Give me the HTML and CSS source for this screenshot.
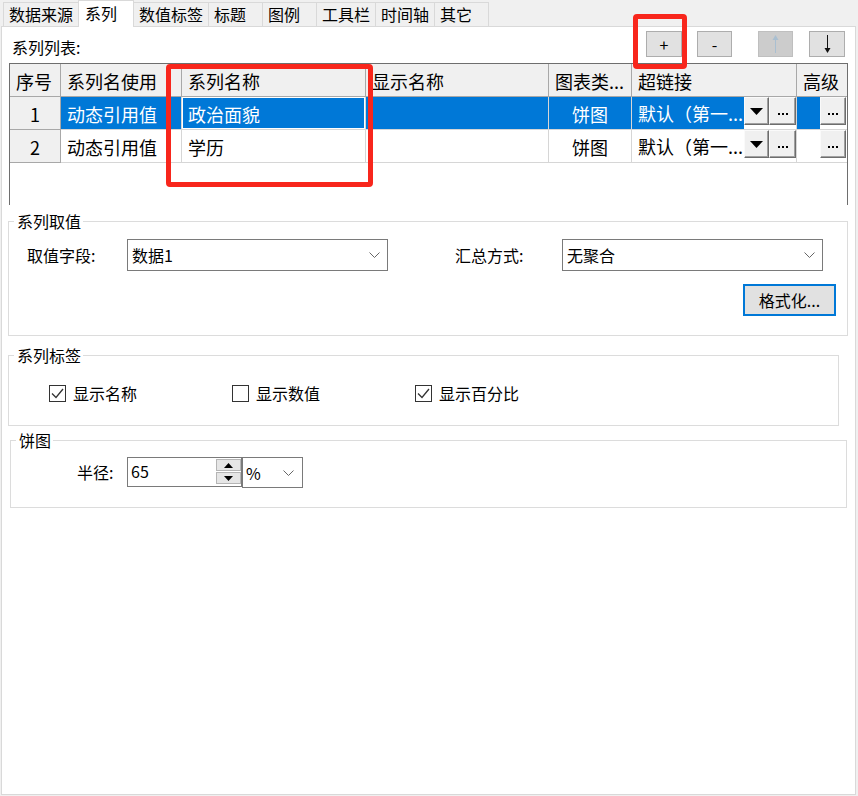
FILE: index.html
```html
<!DOCTYPE html>
<html lang="zh-CN">
<head>
    <meta charset="UTF-8">
    <meta name="viewport" content="width=device-width, initial-scale=1.0">
    <title>系列</title>
    <link rel="stylesheet" href="styles.css">
</head>
<body>
    <div class="tabs">
        <div class="tab">数据来源</div>
        <div class="tab on">系列</div>
        <div class="tab">数值标签</div>
        <div class="tab">标题</div>
        <div class="tab">图例</div>
        <div class="tab">工具栏</div>
        <div class="tab">时间轴</div>
        <div class="tab">其它</div>
    </div>

    <div class="panel">
        <div class="list_head">
            <span class="list_title">系列列表:</span>
            <div class="tool_btns">
                <button class="tool add">+</button>
                <button class="tool del">-</button>
                <button class="tool up" disabled>
                    <svg width="7" height="18" viewBox="0 0 7 18"><line x1="3.5" y1="4" x2="3.5" y2="18" stroke="#a9bfd1"/><polygon points="0.5,5 6.5,5 3.5,0" fill="#a9bfd1"/></svg>
                </button>
                <button class="tool down">
                    <svg width="7" height="18" viewBox="0 0 7 18"><line x1="3.5" y1="0" x2="3.5" y2="14" stroke="#111"/><polygon points="0.5,13 6.5,13 3.5,18" fill="#111"/></svg>
                </button>
            </div>
        </div>

        <div class="grid_wrap">
            <table class="grid">
                <colgroup>
                    <col style="width:51px">
                    <col style="width:121px">
                    <col style="width:184px">
                    <col style="width:183px">
                    <col style="width:83px">
                    <col style="width:165px">
                    <col style="width:50px">
                </colgroup>
                <thead>
                    <tr>
                        <th>序号</th>
                        <th>系列名使用</th>
                        <th>系列名称</th>
                        <th>显示名称</th>
                        <th>图表类...</th>
                        <th>超链接</th>
                        <th>高级</th>
                    </tr>
                </thead>
                <tbody>
                    <tr class="sel">
                        <td class="num">1</td>
                        <td>动态引用值</td>
                        <td class="focus">政治面貌</td>
                        <td></td>
                        <td class="center">饼图</td>
                        <td class="link">
                            <div class="link_cell">
                                <span class="link_text">默认（第一...</span>
                                <button class="cell_btn drop"><svg width="13" height="7" viewBox="0 0 13 7"><polygon points="0,0 13,0 6.5,7" fill="#000"/></svg></button>
                                <button class="cell_btn more"><svg width="10" height="10" viewBox="0 0 10 10"><rect x="0" y="7" width="2" height="2"/><rect x="4" y="7" width="2" height="2"/><rect x="8" y="7" width="2" height="2"/></svg></button>
                            </div>
                        </td>
                        <td class="adv">
                            <div class="adv_cell">
                                <span class="adv_fill"></span>
                                <button class="cell_btn more"><svg width="10" height="10" viewBox="0 0 10 10"><rect x="0" y="7" width="2" height="2"/><rect x="4" y="7" width="2" height="2"/><rect x="8" y="7" width="2" height="2"/></svg></button>
                            </div>
                        </td>
                    </tr>
                    <tr>
                        <td class="num">2</td>
                        <td>动态引用值</td>
                        <td>学历</td>
                        <td></td>
                        <td class="center">饼图</td>
                        <td class="link">
                            <div class="link_cell">
                                <span class="link_text">默认（第一...</span>
                                <button class="cell_btn drop"><svg width="13" height="7" viewBox="0 0 13 7"><polygon points="0,0 13,0 6.5,7" fill="#000"/></svg></button>
                                <button class="cell_btn more"><svg width="10" height="10" viewBox="0 0 10 10"><rect x="0" y="7" width="2" height="2"/><rect x="4" y="7" width="2" height="2"/><rect x="8" y="7" width="2" height="2"/></svg></button>
                            </div>
                        </td>
                        <td class="adv">
                            <div class="adv_cell">
                                <span class="adv_fill"></span>
                                <button class="cell_btn more"><svg width="10" height="10" viewBox="0 0 10 10"><rect x="0" y="7" width="2" height="2"/><rect x="4" y="7" width="2" height="2"/><rect x="8" y="7" width="2" height="2"/></svg></button>
                            </div>
                        </td>
                    </tr>
                </tbody>
            </table>
        </div>

        <!-- 系列取值 -->
        <fieldset class="group g_value">
            <legend>系列取值</legend>
            <div class="field_row">
                <span class="field_label">取值字段:</span>
                <div class="select">
                    <span>数据1</span>
                    <svg width="11" height="6" viewBox="0 0 11 6"><polyline points="0.5,0.5 5.5,5.5 10.5,0.5" fill="none" stroke="#666"/></svg>
                </div>
                <span class="field_label sum">汇总方式:</span>
                <div class="select">
                    <span>无聚合</span>
                    <svg width="11" height="6" viewBox="0 0 11 6"><polyline points="0.5,0.5 5.5,5.5 10.5,0.5" fill="none" stroke="#666"/></svg>
                </div>
            </div>
            <div class="btn_row">
                <button class="format_btn">格式化...</button>
            </div>
        </fieldset>

        <!-- 系列标签 -->
        <fieldset class="group g_label">
            <legend>系列标签</legend>
            <div class="check_row">
                <label class="check">
                    <span class="box"><svg width="15" height="15" viewBox="0 0 15 15"><polyline points="2,7.5 6,11.5 13,3" fill="none" stroke="#333" stroke-width="1.3"/></svg></span>
                    显示名称
                </label>
                <label class="check">
                    <span class="box"></span>
                    显示数值
                </label>
                <label class="check">
                    <span class="box"><svg width="15" height="15" viewBox="0 0 15 15"><polyline points="2,7.5 6,11.5 13,3" fill="none" stroke="#333" stroke-width="1.3"/></svg></span>
                    显示百分比
                </label>
            </div>
        </fieldset>

        <!-- 饼图 -->
        <fieldset class="group g_pie">
            <legend>饼图</legend>
            <div class="pie_row">
                <span class="pie_label">半径:</span>
                <div class="spin_box">
                    <span class="spin_val">65</span>
                    <div class="spin_btns">
                        <span class="spin_btn"><svg width="9" height="5" viewBox="0 0 9 5"><polygon points="0,5 9,5 4.5,0" fill="#000"/></svg></span>
                        <span class="spin_btn"><svg width="9" height="5" viewBox="0 0 9 5"><polygon points="0,0 9,0 4.5,5" fill="#000"/></svg></span>
                    </div>
                </div>
                <div class="unit_select">
                    <span>%</span>
                    <svg width="11" height="6" viewBox="0 0 11 6"><polyline points="0.5,0.5 5.5,5.5 10.5,0.5" fill="none" stroke="#666"/></svg>
                </div>
            </div>
        </fieldset>
    </div>

    <div class="mark mark_add"></div>
    <div class="mark mark_name"></div>
</body>
</html>
```

FILE: styles.css
```css
* {
    box-sizing: border-box;
}

body {
    margin: 0;
    height: 796px;
    position: relative;
    background: #f0f0f0;
    color: #000;
    font-family: "Noto Sans CJK SC", "Microsoft YaHei", sans-serif;
    font-size: 16px;
}

button {
    font-family: inherit;
    color: #000;
    padding: 0;
    margin: 0;
}

/* tabs */
.tabs {
    display: flex;
    align-items: flex-end;
    height: 26px;
    padding-left: 3px;
}

.tab {
    height: 24px;
    min-width: 54px;
    padding: 0 5px;
    line-height: 22px;
    white-space: nowrap;
    border-top: 1px solid #d9d9d9;
    border-right: 1px solid #d9d9d9;
}

.tab:first-child {
    border-left: 1px solid #d9d9d9;
}

.tab.on {
    position: relative;
    z-index: 1;
    height: 27px;
    min-width: 56px;
    margin: 0 0 -1px -1px;
    padding: 0 6px;
    line-height: 24px;
    background: #fff;
    border-left: 1px solid #d9d9d9;
}

/* panel */
.panel {
    width: 855px;
    height: 769px;
    margin-left: 1px;
    background: #fff;
    border: 1px solid #d9d9d9;
}

.list_head {
    display: flex;
    height: 36px;
    padding-left: 10px;
}

.list_title {
    margin-top: 10px;
    line-height: 20px;
}

.tool_btns {
    display: flex;
    margin-left: auto;
    padding: 4px 10px 0 0;
}

.tool {
    width: 36px;
    height: 26px;
    background: #e1e1e1;
    border: 1px solid #adadad;
    font-size: 16px;
    line-height: 22px;
    display: flex;
    align-items: center;
    justify-content: center;
}

.tool.del { width: 35px; margin-left: 15px; }
.tool.up { width: 35px; margin-left: 26px; background: #cccccc; border-color: #bfbfbf; }
.tool.down { margin-left: 16px; }

/* grid */
.grid_wrap {
    width: 839px;
    height: 142px;
    margin-left: 7px;
    overflow: hidden;
    border: 1px solid #6e6e6e;
    border-bottom: none;
}

.grid {
    width: 837px;
    table-layout: fixed;
    border-collapse: separate;
    border-spacing: 0;
    font-size: 18px;
}

.grid th, .grid td {
    height: 33px;
    padding: 2px 6px 0;
    line-height: 24px;
    text-align: left;
    font-weight: normal;
    white-space: nowrap;
    overflow: hidden;
    border-right: 1px solid #d6d6d6;
    border-bottom: 1px solid #d6d6d6;
}

.grid th {
    background: #f0f0f0;
    border-color: #a8a8a8;
}

.grid th:last-child, .grid td:last-child {
    border-right: none;
}

.grid td.num {
    background: #f0f0f0;
    text-align: center;
    border-color: #a8a8a8;
}

.grid td.center {
    text-align: center;
}

.grid tr.sel td {
    background: #0078d7;
    color: #fff;
}

.grid tr.sel td.num {
    background: #f0f0f0;
    color: #000;
}

.grid tr.sel td.focus {
    box-shadow: inset 0 0 0 1px #fff;
}

.grid td.link, .grid td.adv,
.grid tr.sel td.link, .grid tr.sel td.adv {
    padding: 0;
    background: #fff;
}

.link_cell, .adv_cell {
    display: flex;
    align-items: flex-start;
    height: 32px;
}

.link_text {
    flex: 1;
    height: 32px;
    padding: 2px 0 0 6px;
    line-height: 28px;
    overflow: hidden;
}

.sel .link_text {
    background: #0078d7;
}

.adv_fill {
    width: 23px;
    height: 32px;
}

.sel .adv_fill {
    background: #0078d7;
}

.cell_btn {
    height: 28px;
    display: flex;
    align-items: center;
    justify-content: center;
    background: #f0f0f0;
    border: 1px solid;
    border-color: #fafafa #6d6d6d #6d6d6d #fafafa;
    box-shadow: inset -1px -1px 0 #a0a0a0;
}

.cell_btn.drop { width: 25px; }
.cell_btn.more { width: 27px; }
.adv_cell .cell_btn.more { width: 26px; }

/* group boxes */
.group {
    min-width: 0;
    margin: 0;
    padding: 0;
    border: 1px solid #dcdcdc;
}

.group legend {
    margin-left: 5px;
    padding: 0 2px 0 3px;
    line-height: 20px;
}

.g_value { width: 840px; margin: 6px 0 0 6px; }
.g_label { width: 831px; margin: 9px 0 0 6px; }
.g_pie { width: 837px; margin: 4px 0 0 8px; }

.field_row {
    display: flex;
    align-items: center;
    height: 32px;
    margin-top: 8px;
    padding-left: 18px;
}

.field_label {
    width: 100px;
    line-height: 20px;
}

.field_label.sum {
    width: 107px;
    margin-left: 67px;
}

.select {
    width: 261px;
    height: 32px;
    display: flex;
    align-items: center;
    justify-content: space-between;
    padding: 0 7px 0 4px;
    border: 1px solid #7a7a7a;
    line-height: 20px;
}

.btn_row {
    display: flex;
    justify-content: flex-end;
    margin-top: 13px;
    padding: 0 11px 19px 0;
}

.format_btn {
    width: 93px;
    height: 32px;
    font-size: 16px;
    background: #e1e1e1;
    border: 2px solid #0078d7;
}

.check_row {
    display: flex;
    height: 20px;
    margin: 18px 0 22px;
    padding-left: 40px;
}

.check {
    width: 183px;
    display: flex;
    align-items: center;
    gap: 7px;
    line-height: 20px;
}

.check .box {
    width: 17px;
    height: 17px;
    display: flex;
    align-items: center;
    justify-content: center;
    border: 1px solid #333;
    background: #fff;
}

.pie_row {
    display: flex;
    align-items: flex-start;
    height: 31px;
    margin: 7px 0 19px;
    padding-left: 66px;
}

.pie_label {
    width: 50px;
    line-height: 30px;
}

.spin_box {
    width: 115px;
    height: 30px;
    display: flex;
    border: 1px solid #7a7a7a;
}

.spin_val {
    flex: 1;
    padding-left: 3px;
    line-height: 26px;
}

.spin_btns {
    width: 25px;
    display: flex;
    flex-direction: column;
    gap: 1px;
    padding: 1px 0 0;
}

.spin_btn {
    height: 12px;
    display: flex;
    align-items: center;
    justify-content: center;
    background: #e6e6e6;
    border: 1px solid #b5b5b5;
}

.unit_select {
    width: 61px;
    height: 31px;
    display: flex;
    align-items: center;
    justify-content: space-between;
    padding: 0 8px 0 3px;
    border: 1px solid #7a7a7a;
    line-height: 20px;
}

/* red annotation boxes */
.mark {
    position: absolute;
    border: 5px solid #f8261c;
    border-radius: 4px;
}

.mark_add {
    left: 633px;
    top: 14px;
    width: 54px;
    height: 55px;
}

.mark_name {
    left: 166px;
    top: 64px;
    width: 207px;
    height: 123px;
}
```
